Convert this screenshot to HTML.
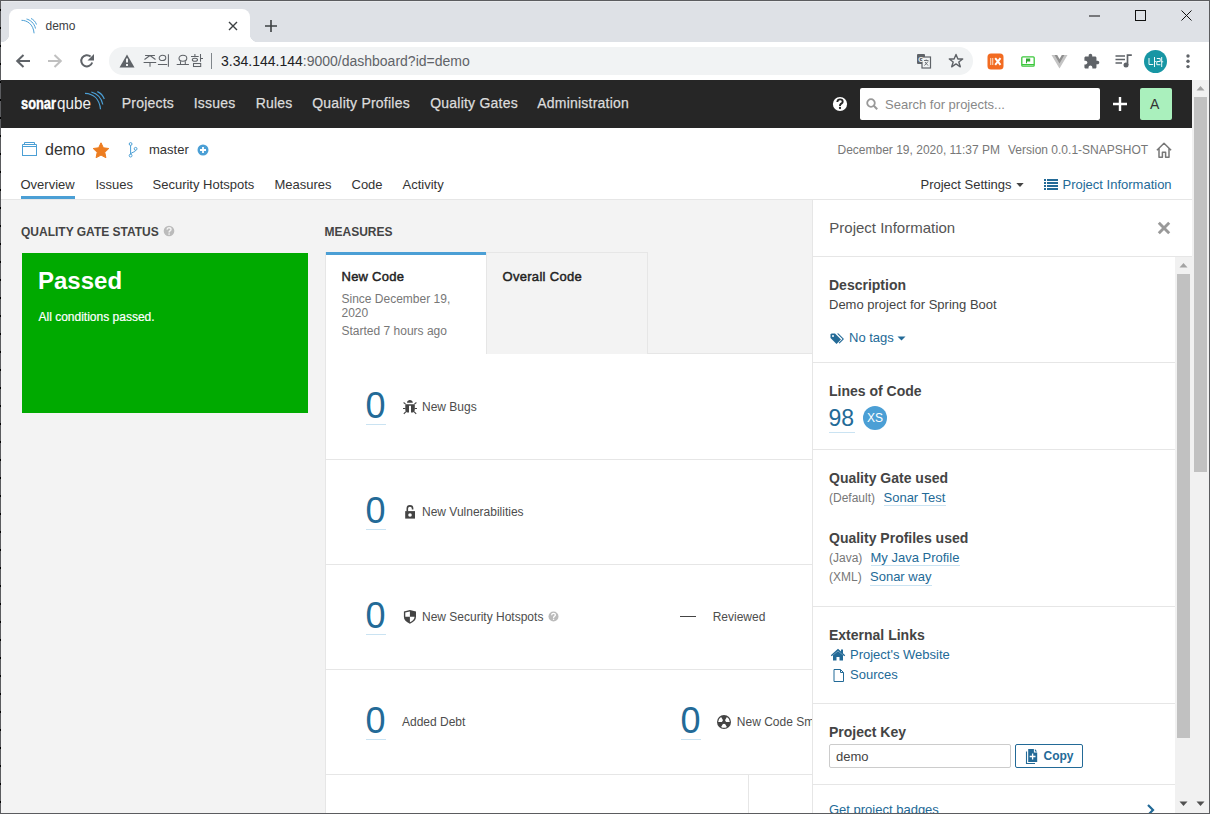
<!DOCTYPE html>
<html><head><meta charset="utf-8">
<style>
*{box-sizing:border-box;margin:0;padding:0}
html,body{width:1210px;height:814px;overflow:hidden;background:#fff;font-family:"Liberation Sans",sans-serif;color:#333;position:relative}
.a{position:absolute}
.t{position:absolute;white-space:nowrap}
#tabs{position:absolute;left:1px;top:1px;width:1208px;height:41px;background:#dee1e6}
#tab{position:absolute;left:8px;top:8px;width:241px;height:33px;background:#fff;border-radius:8px 8px 0 0}
#tab:before,#tab:after{content:"";position:absolute;bottom:0;width:8px;height:8px}
#tab:before{left:-8px;background:radial-gradient(circle at 0 0,#dee1e6 8px,#fff 8.5px)}
#tab:after{right:-8px;background:radial-gradient(circle at 100% 0,#dee1e6 8px,#fff 8.5px)}
#toolbar{position:absolute;left:1px;top:42px;width:1208px;height:38px;background:#fff}
#omni{position:absolute;left:108px;top:5px;width:864px;height:28px;background:#f1f3f4;border-radius:14px}
#frame{position:absolute;left:0;top:0;width:1210px;height:814px;border:1px solid #5b5c5f;pointer-events:none}
</style></head><body>
 <div id="tabs">
  <div id="tab">
   <svg class="a" style="left:12px;top:9px" width="18" height="18" viewBox="0 0 18 18"><g fill="none" stroke="#4b9fd5" stroke-width="1"><path d="M0.5 2.3C6 2.3 12.3 6 13.1 15.3"/><path d="M5.5 1C9 1.8 13.3 5 14.5 10.5"/><path d="M10 0.5C12 1.3 14.5 3.5 15.5 6.5"/></g></svg>
   <div class="a" style="left:36.5px;top:9px;font-size:12px;color:#3c4043;line-height:16px">demo</div>
   <svg class="a" style="left:219px;top:12px" width="10" height="10" viewBox="0 0 10 10"><path d="M1 1L9 9M9 1L1 9" stroke="#3c4043" stroke-width="1.4"/></svg>
  </div>
  <svg class="a" style="left:263px;top:18px" width="14" height="14" viewBox="0 0 14 14"><path d="M7 1V13M1 7H13" stroke="#3c4043" stroke-width="1.6"/></svg>
  <svg class="a" style="left:1088px;top:14px" width="11" height="2"><rect width="11" height="1" y="0.5" fill="#111"/></svg>
  <svg class="a" style="left:1134px;top:9px" width="11" height="11"><rect x="0.5" y="0.5" width="10" height="10" fill="none" stroke="#111" stroke-width="1"/></svg>
  <svg class="a" style="left:1180px;top:9px" width="11" height="11"><path d="M0.5 0.5L10.5 10.5M10.5 0.5L0.5 10.5" stroke="#111" stroke-width="1"/></svg>
 </div>
 <div id="toolbar">
  <svg class="a" style="left:14px;top:11px" width="16" height="16" viewBox="0 0 16 16"><path d="M15 8H2.5M8.5 2L2.2 8L8.5 14" fill="none" stroke="#5f6368" stroke-width="2"/></svg>
  <svg class="a" style="left:46px;top:11px" width="16" height="16" viewBox="0 0 16 16"><path d="M1 8H13.5M7.5 2L13.8 8L7.5 14" fill="none" stroke="#c0c0c0" stroke-width="2"/></svg>
  <svg class="a" style="left:78px;top:11px" width="16" height="16" viewBox="0 0 16 16"><path d="M13.2 9.5A5.6 5.6 0 1 1 11.6 3.6" fill="none" stroke="#5f6368" stroke-width="2"/><path d="M15 1V7.5H8.5Z" fill="#5f6368"/></svg>
  <div id="omni">
   <svg class="a" style="left:10px;top:7px" width="16" height="14" viewBox="0 0 16 14"><path d="M8 0.5L15.5 13.5H0.5Z" fill="#5f6368"/><rect x="7" y="4.5" width="2" height="4" fill="#f1f3f4"/><rect x="7" y="10" width="2" height="2" fill="#f1f3f4"/></svg>
   <svg class="a" style="left:34px;top:7px" width="62" height="14" viewBox="0 0 62 14"><g fill="none" stroke="#5f6368" stroke-width="1.05">
    <path d="M2.1 1.5H11.9M7 1.5L1.5 5.5M7 1.5L12.5 5.5M0.6 8.5H13.2M7 8.5V12.8"/>
    <ellipse cx="19.5" cy="3.9" rx="3.3" ry="2.6"/><path d="M14.9 10.5H24.2M25.4 0.2V12.8"/>
    <ellipse cx="39.9" cy="4.2" rx="3.9" ry="3"/><path d="M37.5 7.2V10.5M42.3 7.2V10.5M33.7 10.5H45.9"/>
    <path d="M51.9 0V2.5M48 2.5H55.7M57.5 0V7.8M57.5 4.4H60"/><ellipse cx="51.9" cy="5.8" rx="2.6" ry="1.5"/><rect x="50.5" y="9.5" width="7.2" height="3"/>
   </g></svg>
   <div class="a" style="left:102px;top:6px;width:1px;height:16px;background:#80868b"></div>
   <div class="a" style="left:112px;top:5px;font-size:14px;line-height:18px;color:#5f6368;white-space:nowrap"><span style="color:#202124">3.34.144.144</span>:9000/dashboard?id=demo</div>
   <svg class="a" style="left:807px;top:6px" width="16" height="16" viewBox="0 0 16 16"><rect x="1" y="1" width="8" height="10" rx="1" fill="#5f6368"/><rect x="6" y="4" width="8.5" height="11" fill="#f1f3f4" stroke="#5f6368" stroke-width="1.2"/><text x="2.2" y="8.8" font-size="7" font-family="Liberation Sans" font-weight="bold" fill="#f1f3f4">G</text><path d="M8 7.5H12.5M10.2 6.5V7.5M8.5 12.5L12 8.5M9 9L12 12.5" stroke="#5f6368" stroke-width="0.9" fill="none"/></svg>
   <svg class="a" style="left:839px;top:6px" width="16" height="16" viewBox="0 0 16 16"><path d="M8 1.5L9.9 6H14.7L10.8 9L12.3 13.8L8 10.9L3.7 13.8L5.2 9L1.3 6H6.1Z" fill="none" stroke="#5f6368" stroke-width="1.4" stroke-linejoin="round"/></svg>
  </div>
  <svg class="a" style="left:986px;top:11px" width="17" height="17" viewBox="0 0 17 17"><rect x="0.5" y="0.5" width="16" height="16" rx="3.5" fill="#f26b21"/><rect x="3" y="5" width="1.3" height="7" fill="#f9c39f"/><rect x="5" y="5" width="1.3" height="7" fill="#f9c39f"/><path d="M8.2 5.2L13.5 11.8M13.5 5.2L8.2 11.8" stroke="#fff" stroke-width="2"/></svg>
  <svg class="a" style="left:1020px;top:14px" width="14" height="11" viewBox="0 0 14 11"><rect x="0.8" y="0.8" width="12.4" height="9.4" rx="1" fill="none" stroke="#3cc83c" stroke-width="1.3"/><path d="M5 2.6H9.2V5.5H6V7.3H5Z" fill="#2fa82f"/><rect x="1" y="8" width="12" height="1.2" fill="#3cc83c"/></svg>
  <svg class="a" style="left:1050px;top:12px" width="17" height="15" viewBox="0 0 17 15"><path d="M0.5 1H5L8.5 7L12 1H16.5L8.5 14.5Z" fill="#c4c4c4"/><path d="M3.6 1H6.2L8.5 5L10.8 1H13.4L8.5 9.6Z" fill="#8f8f8f"/></svg>
  <svg class="a" style="left:1082px;top:11px" width="17" height="17" viewBox="0 0 24 24"><path d="M20.5 11H19V7c0-1.1-.9-2-2-2h-4V3.5C13 2.12 11.88 1 10.5 1S8 2.12 8 3.5V5H4c-1.1 0-1.99.9-1.99 2v3.8H3.5c1.49 0 2.7 1.21 2.7 2.7s-1.21 2.7-2.7 2.7H2V20c0 1.1.9 2 2 2h3.8v-1.5c0-1.49 1.21-2.7 2.7-2.7 1.49 0 2.7 1.21 2.7 2.7V22H17c1.1 0 2-.9 2-2v-4h1.5c1.38 0 2.5-1.12 2.5-2.5S21.88 11 20.5 11z" fill="#5f6368"/></svg>
  <svg class="a" style="left:1114px;top:12px" width="18" height="14" viewBox="0 0 18 14"><path d="M0.5 2H10M0.5 5.5H10M0.5 9H7" stroke="#5f6368" stroke-width="1.6"/><path d="M12.5 11V1.2H16.8" fill="none" stroke="#5f6368" stroke-width="1.7"/><circle cx="11" cy="11" r="2.5" fill="#5f6368"/></svg>
  <div class="a" style="left:1143px;top:8px;width:23px;height:23px;border-radius:50%;background:#1796a4"></div>
  <svg class="a" style="left:1147px;top:14px" width="16" height="13" viewBox="0 0 16 13"><g fill="none" stroke="#fff" stroke-width="0.95"><path d="M1 2V8.5H5.2M6.5 1V11M6.5 5.5H7.8M8.8 2.5H12.2V5.5H8.8V8.7H12.4M13.7 1V11M13.7 5.8H15.2"/></g></svg>
  <svg class="a" style="left:1184px;top:12px" width="6" height="15" viewBox="0 0 6 15"><circle cx="3" cy="2" r="1.7" fill="#5f6368"/><circle cx="3" cy="7.3" r="1.7" fill="#5f6368"/><circle cx="3" cy="12.6" r="1.7" fill="#5f6368"/></svg>
 </div>

<div class="a" style="left:1px;top:80px;width:1191px;height:48px;background:#262626;"></div>
<svg class="a" style="left:20px;top:89px;" width="86" height="26" viewBox="0 0 86 26"><text x="1" y="20.2" font-family="Liberation Sans" font-weight="700" font-size="16" fill="#fff" stroke="#fff" stroke-width="0.45" textLength="35" lengthAdjust="spacingAndGlyphs">sonar</text><text x="37" y="20.2" font-family="Liberation Sans" font-size="16.5" fill="#f0f0f0" textLength="34" lengthAdjust="spacingAndGlyphs">qube</text><g fill="none" stroke="#4b9fd5" stroke-width="1.2"><path d="M65 4.3C73 4.6 79.5 9.5 80.5 20.3"/><path d="M71.3 3C77 4.6 81.5 9 82.8 15.5"/><path d="M77.3 2.6C80.5 4 83 6.5 84.3 10"/></g></svg>
<div class="t" style="left:121.7px;top:96.35px;font-size:14px;line-height:14px;color:#dcdcdc;font-weight:400;letter-spacing:0.22px;-webkit-text-stroke:0.25px #dcdcdc">Projects</div>
<div class="t" style="left:193.7px;top:96.35px;font-size:14px;line-height:14px;color:#dcdcdc;font-weight:400;letter-spacing:0.22px;-webkit-text-stroke:0.25px #dcdcdc">Issues</div>
<div class="t" style="left:255.7px;top:96.35px;font-size:14px;line-height:14px;color:#dcdcdc;font-weight:400;letter-spacing:0.22px;-webkit-text-stroke:0.25px #dcdcdc">Rules</div>
<div class="t" style="left:312.2px;top:96.35px;font-size:14px;line-height:14px;color:#dcdcdc;font-weight:400;letter-spacing:0.22px;-webkit-text-stroke:0.25px #dcdcdc">Quality Profiles</div>
<div class="t" style="left:430.2px;top:96.35px;font-size:14px;line-height:14px;color:#dcdcdc;font-weight:400;letter-spacing:0.22px;-webkit-text-stroke:0.25px #dcdcdc">Quality Gates</div>
<div class="t" style="left:537.2px;top:96.35px;font-size:14px;line-height:14px;color:#dcdcdc;font-weight:400;letter-spacing:0.22px;-webkit-text-stroke:0.25px #dcdcdc">Administration</div>
<svg class="a" style="left:832px;top:96px;" width="16" height="16" viewBox="0 0 16 16"><circle cx="8" cy="8" r="7.1" fill="#fff"/><path d="M5.3 6C5.5 4.1 6.7 3.4 8 3.4C9.6 3.4 10.7 4.4 10.7 5.7C10.7 7.1 9.3 7.5 8.6 8.2C8.2 8.6 8 9 8 9.9" fill="none" stroke="#262626" stroke-width="1.9"/><circle cx="8" cy="12" r="1.15" fill="#262626"/></svg>
<div class="a" style="left:860px;top:88px;width:240px;height:32px;background:#fff;border-radius:2px"></div>
<svg class="a" style="left:866px;top:98px;" width="12" height="12" viewBox="0 0 12 12"><circle cx="5" cy="5" r="3.8" fill="none" stroke="#999" stroke-width="1.8"/><path d="M7.8 7.8L11.2 11.2" stroke="#999" stroke-width="2"/></svg>
<div class="t" style="left:885px;top:97.80px;font-size:13px;line-height:13px;color:#888;font-weight:400;">Search for projects...</div>
<svg class="a" style="left:1112px;top:96px;" width="16" height="16" viewBox="0 0 16 16"><path d="M8 1V15M1 8H15" stroke="#fff" stroke-width="2.4"/></svg>
<div class="a" style="left:1140px;top:88px;width:32px;height:32px;background:#aaf0bd;border-radius:2px"></div>
<div class="t" style="left:1150px;top:97.15px;font-size:14px;line-height:14px;color:#333;font-weight:400;">A</div>
<div class="a" style="left:1px;top:128px;width:1191px;height:72px;background:#fff;"></div>
<div class="a" style="left:1px;top:199px;width:1191px;height:1px;background:#e6e6e6;"></div>
<svg class="a" style="left:22px;top:142px;" width="15" height="14" viewBox="0 0 15 14"><g fill="none" stroke="#4b9fd5" stroke-width="1"><rect x="0.5" y="4.5" width="14" height="9"/><path d="M0.5 4.5V2.5H14.5V4.5M2.5 2.5V0.5H12.5V2.5"/></g></svg>
<div class="t" style="left:45px;top:142.46px;font-size:16px;line-height:16px;color:#333;font-weight:400;">demo</div>
<svg class="a" style="left:92px;top:142px;" width="18" height="17" viewBox="0 0 18 17"><path d="M9 0.8L11.4 5.8L16.8 6.5L12.8 10.3L13.9 15.7L9 13.1L4.1 15.7L5.2 10.3L1.2 6.5L6.6 5.8Z" fill="#ed7d20" stroke="#ed7d20" stroke-width="1" stroke-linejoin="round"/></svg>
<svg class="a" style="left:127px;top:141px;" width="12" height="18" viewBox="0 0 12 18"><g fill="none" stroke="#4b9fd5" stroke-width="1"><circle cx="3.6" cy="3" r="1.4"/><circle cx="3.6" cy="14.6" r="1.4"/><circle cx="8.6" cy="7.8" r="1.4"/><path d="M3.6 4.4V13.2M8.6 9.2C8.6 11.6 3.6 11 3.6 13.2"/></g></svg>
<div class="t" style="left:149px;top:143.00px;font-size:13px;line-height:13px;color:#333;font-weight:400;">master</div>
<svg class="a" style="left:197px;top:144px;" width="12" height="12" viewBox="0 0 12 12"><circle cx="6" cy="6" r="5.5" fill="#4b9fd5"/><path d="M6 3V9M3 6H9" stroke="#fff" stroke-width="1.8"/></svg>
<div class="t" style="left:837.5px;top:143.84px;font-size:12px;line-height:12px;color:#777;font-weight:400;">December 19, 2020, 11:37 PM</div>
<div class="t" style="left:1008px;top:143.84px;font-size:12px;line-height:12px;color:#777;font-weight:400;">Version 0.0.1-SNAPSHOT</div>
<svg class="a" style="left:1156px;top:141px;" width="16" height="18" viewBox="0 0 16 18"><path d="M0.9 9.3L8 2.3L15.1 9.3M3 7.4V16.2H6.4V11.3H9.6V16.2H13V7.4" fill="none" stroke="#777" stroke-width="1.5" stroke-linejoin="round"/></svg>
<div class="t" style="left:20.5px;top:177.80px;font-size:13px;line-height:13px;color:#333;font-weight:400;">Overview</div>
<div class="t" style="left:95.5px;top:177.80px;font-size:13px;line-height:13px;color:#333;font-weight:400;">Issues</div>
<div class="t" style="left:152.5px;top:177.80px;font-size:13px;line-height:13px;color:#333;font-weight:400;">Security Hotspots</div>
<div class="t" style="left:274.5px;top:177.80px;font-size:13px;line-height:13px;color:#333;font-weight:400;">Measures</div>
<div class="t" style="left:351.5px;top:177.80px;font-size:13px;line-height:13px;color:#333;font-weight:400;">Code</div>
<div class="t" style="left:402.5px;top:177.80px;font-size:13px;line-height:13px;color:#333;font-weight:400;">Activity</div>
<div class="a" style="left:21px;top:196px;width:54px;height:3px;background:#4b9fd5;"></div>
<div class="t" style="left:920.5px;top:177.80px;font-size:13px;line-height:13px;color:#333;font-weight:400;">Project Settings</div>
<svg class="a" style="left:1015.5px;top:183px;" width="8" height="5" viewBox="0 0 8 5"><path d="M0.3 0H7.7L4 4Z" fill="#444"/></svg>
<svg class="a" style="left:1044px;top:179px;" width="14" height="11" viewBox="0 0 14 11"><g fill="#236a97"><rect x="0" y="0" width="2" height="2"/><rect x="3" y="0" width="11" height="2"/><rect x="0" y="3" width="2" height="2"/><rect x="3" y="3" width="11" height="2"/><rect x="0" y="6" width="2" height="2"/><rect x="3" y="6" width="11" height="2"/><rect x="0" y="9" width="2" height="2"/><rect x="3" y="9" width="11" height="2"/></g></svg>
<div class="t" style="left:1062.5px;top:177.80px;font-size:13px;line-height:13px;color:#236a97;font-weight:400;">Project Information</div>
<div class="a" style="left:1px;top:200px;width:1191px;height:613px;background:#f3f3f3;"></div>
<div class="t" style="left:21px;top:225.84px;font-size:12px;line-height:12px;color:#444;font-weight:700;">QUALITY GATE STATUS</div>
<svg class="a" style="left:163px;top:225px;" width="12" height="12" viewBox="0 0 12 12"><circle cx="6" cy="6" r="5.3" fill="#bbb"/><path d="M4 4.6C4.1 3.3 5 2.7 6 2.7C7.2 2.7 8 3.4 8 4.4C8 5.4 7 5.7 6.5 6.2C6.2 6.5 6.1 6.8 6.1 7.4" fill="none" stroke="#f3f3f3" stroke-width="1.4"/><circle cx="6.1" cy="9" r="0.85" fill="#f3f3f3"/></svg>
<div class="a" style="left:22px;top:253px;width:286px;height:160px;background:#00aa00;"></div>
<div class="t" style="left:38px;top:268.68px;font-size:24px;line-height:24px;color:#fff;font-weight:700;">Passed</div>
<div class="t" style="left:38.5px;top:310.64px;font-size:12px;line-height:12px;color:#fff;font-weight:400;-webkit-text-stroke:0.2px #fff">All conditions passed.</div>
<div class="t" style="left:324.5px;top:225.84px;font-size:12px;line-height:12px;color:#444;font-weight:700;">MEASURES</div>
<div class="a" style="left:325px;top:252px;width:487px;height:561px;background:#fff;border-left:1px solid #e6e6e6"></div>
<div class="a" style="left:486px;top:252px;width:162px;height:102px;background:#f3f3f3;border:1px solid #e6e6e6;border-bottom:none"></div>
<div class="a" style="left:648px;top:252px;width:164px;height:102px;background:#f3f3f3;border-bottom:1px solid #e6e6e6"></div>
<div class="a" style="left:326px;top:252px;width:160px;height:3px;background:#4b9fd5;"></div>
<div class="t" style="left:341.5px;top:270.00px;font-size:13px;line-height:13px;color:#222;font-weight:400;letter-spacing:0.25px;-webkit-text-stroke:0.45px #222">New Code</div>
<div class="t" style="left:341.5px;top:292.74px;font-size:12px;line-height:12px;color:#777;font-weight:400;">Since December 19,</div>
<div class="t" style="left:341.5px;top:307.14px;font-size:12px;line-height:12px;color:#777;font-weight:400;">2020</div>
<div class="t" style="left:341.5px;top:324.84px;font-size:12px;line-height:12px;color:#777;font-weight:400;">Started 7 hours ago</div>
<div class="t" style="left:502.5px;top:269.80px;font-size:13px;line-height:13px;color:#222;font-weight:400;letter-spacing:0.3px;-webkit-text-stroke:0.45px #222">Overall Code</div>
<div class="a" style="left:326px;top:459px;width:486px;height:1px;background:#e6e6e6;"></div>
<div class="a" style="left:326px;top:564px;width:486px;height:1px;background:#e6e6e6;"></div>
<div class="a" style="left:326px;top:669px;width:486px;height:1px;background:#e6e6e6;"></div>
<div class="a" style="left:326px;top:774px;width:486px;height:1px;background:#e6e6e6;"></div>
<div class="a" style="left:748px;top:775px;width:1px;height:38px;background:#e6e6e6;"></div>
<div class="t" style="left:365.5px;top:388.03px;font-size:36px;line-height:36px;color:#236a97;font-weight:400;">0</div>
<div class="a" style="left:366px;top:424px;width:20px;height:1px;background:#cae3f2;"></div>
<svg class="a" style="left:403px;top:400px;" width="14" height="15" viewBox="0 0 14 15"><path d="M4 2.7C4 0.9 5.5 0.1 6.9 0.1C8.3 0.1 9.8 0.9 9.8 2.7Z" fill="#444"/><path d="M2.3 4.2H11.8V9.5C11.8 11 11 12.6 9.5 12.6H8V5.8H6V12.6H4.6C3 12.6 2.3 11 2.3 9.5Z" fill="#444"/><path d="M0.6 2.5L2.6 4.1M0 8.5H2.5M0.8 13.8L3 11.6M13.4 2.5L11.4 4.1M14 8.5H11.5M13.2 13.8L11 11.6" stroke="#444" stroke-width="1.1" fill="none"/></svg>
<div class="t" style="left:422.0px;top:400.84px;font-size:12px;line-height:12px;color:#4d4d4d;font-weight:400;">New Bugs</div>
<div class="t" style="left:365.5px;top:493.03px;font-size:36px;line-height:36px;color:#236a97;font-weight:400;">0</div>
<div class="a" style="left:366px;top:529px;width:20px;height:1px;background:#cae3f2;"></div>
<svg class="a" style="left:404px;top:504px;" width="12" height="15" viewBox="0 0 12 15"><path d="M3.3 7.5V4.55A2.65 2.65 0 0 1 8.6 4.55V5.4" fill="none" stroke="#444" stroke-width="1.6"/><rect x="1.2" y="7.1" width="9.8" height="7.5" fill="#444"/><circle cx="6" cy="11" r="1.8" fill="#fff"/></svg>
<div class="t" style="left:422.0px;top:505.84px;font-size:12px;line-height:12px;color:#4d4d4d;font-weight:400;">New Vulnerabilities</div>
<div class="t" style="left:365.5px;top:598.03px;font-size:36px;line-height:36px;color:#236a97;font-weight:400;">0</div>
<div class="a" style="left:366px;top:634px;width:20px;height:1px;background:#cae3f2;"></div>
<svg class="a" style="left:403px;top:609px;" width="14" height="16" viewBox="0 0 14 16"><path d="M6.9 1.1L13 2.5V7.8C13 10.8 10.8 13.2 6.9 14.7C3 13.2 0.9 10.8 0.9 7.8V2.5Z" fill="#444"/><path d="M2.3 3.6L6.9 2.6V7.7H2.3Z M6.9 7.7H11.6C11.4 10.2 9.7 12.2 6.9 13.3Z" fill="#fff"/></svg>
<div class="t" style="left:422.0px;top:610.84px;font-size:12px;line-height:12px;color:#4d4d4d;font-weight:400;">New Security Hotspots</div>
<svg class="a" style="left:548px;top:611px;" width="11" height="11" viewBox="0 0 11 11"><circle cx="5.5" cy="5.5" r="5" fill="#bbb"/><path d="M3.6 4.2C3.7 3 4.5 2.4 5.5 2.4C6.6 2.4 7.4 3.1 7.4 4C7.4 4.9 6.5 5.2 6 5.7C5.7 6 5.6 6.3 5.6 6.9" fill="none" stroke="#fff" stroke-width="1.3"/><circle cx="5.6" cy="8.3" r="0.8" fill="#fff"/></svg>
<div class="a" style="left:680px;top:616px;width:16px;height:1px;background:#444;"></div>
<div class="t" style="left:712.7px;top:610.84px;font-size:12px;line-height:12px;color:#4d4d4d;font-weight:400;">Reviewed</div>
<div class="t" style="left:365.5px;top:703.03px;font-size:36px;line-height:36px;color:#236a97;font-weight:400;">0</div>
<div class="a" style="left:366px;top:739px;width:20px;height:1px;background:#cae3f2;"></div>
<div class="t" style="left:402.0px;top:715.84px;font-size:12px;line-height:12px;color:#4d4d4d;font-weight:400;">Added Debt</div>
<div class="t" style="left:680.5px;top:703.03px;font-size:36px;line-height:36px;color:#236a97;font-weight:400;">0</div>
<div class="a" style="left:681px;top:739px;width:20px;height:1px;background:#cae3f2;"></div>
<svg class="a" style="left:716px;top:714px;" width="16" height="16" viewBox="0 0 16 16"><circle cx="8" cy="8" r="7" fill="#444"/><path d="M6.10 8.00L2.20 8.00A5.8 5.8 0 0 1 5.10 2.98L7.05 6.35A1.9 1.9 0 0 0 6.10 8.00ZM8.95 6.35L10.90 2.98A5.8 5.8 0 0 1 13.80 8.00L9.90 8.00A1.9 1.9 0 0 0 8.95 6.35ZM8.95 9.65L10.90 13.02A5.8 5.8 0 0 1 5.10 13.02L7.05 9.65A1.9 1.9 0 0 0 8.95 9.65Z" fill="#fff"/></svg>
<div class="t" style="left:736.8px;top:715.84px;font-size:12px;line-height:12px;color:#4d4d4d;font-weight:400;">New Code Smells</div>
<div class="a" style="left:812px;top:200px;width:380px;height:613px;background:#fff;border-left:1px solid #e6e6e6"></div>
<div class="a" style="left:813px;top:256px;width:379px;height:1px;background:#e6e6e6;"></div>
<div class="t" style="left:829.3px;top:220.10px;font-size:15px;line-height:15px;color:#555;font-weight:400;">Project Information</div>
<svg class="a" style="left:1157px;top:221px;" width="14" height="14" viewBox="0 0 14 14"><path d="M1.8 1.8L12.2 12.2M12.2 1.8L1.8 12.2" stroke="#999" stroke-width="2.9"/></svg>
<div class="t" style="left:829px;top:278.15px;font-size:14px;line-height:14px;color:#444;font-weight:700;">Description</div>
<div class="t" style="left:829px;top:297.50px;font-size:13px;line-height:13px;color:#444;font-weight:400;">Demo project for Spring Boot</div>
<svg class="a" style="left:830px;top:333px;" width="15" height="12" viewBox="0 0 15 12"><path d="M0.5 1.5V5L6.5 11L11 6.5L5 0.5H1.5Z" fill="#236a97"/><circle cx="3" cy="3" r="1" fill="#fff"/><path d="M7 0.5H8.5L14 6L9.5 10.5L8.7 9.7L12.5 6Z" fill="#236a97"/></svg>
<div class="t" style="left:849px;top:331.40px;font-size:13px;line-height:13px;color:#236a97;font-weight:400;">No tags</div>
<svg class="a" style="left:897px;top:336px;" width="9" height="5" viewBox="0 0 9 5"><path d="M0.5 0.5H8.5L4.5 4.5Z" fill="#236a97"/></svg>
<div class="a" style="left:813px;top:362px;width:362px;height:1px;background:#e6e6e6;"></div>
<div class="t" style="left:829px;top:383.85px;font-size:14px;line-height:14px;color:#444;font-weight:700;">Lines of Code</div>
<div class="t" style="left:828.5px;top:406.53px;font-size:23px;line-height:23px;color:#236a97;font-weight:400;">98</div>
<div class="a" style="left:829px;top:432px;width:26px;height:1px;background:#cae3f2;"></div>
<div class="a" style="left:863px;top:406px;width:24px;height:24px;background:#4b9fd5;border-radius:50%"></div>
<div class="t" style="left:867px;top:411.84px;font-size:12px;line-height:12px;color:#fff;font-weight:400;">XS</div>
<div class="a" style="left:813px;top:449px;width:362px;height:1px;background:#e6e6e6;"></div>
<div class="t" style="left:829px;top:470.95px;font-size:14px;line-height:14px;color:#444;font-weight:700;">Quality Gate used</div>
<div class="t" style="left:829px;top:491.74px;font-size:12px;line-height:12px;color:#777;font-weight:400;">(Default)</div>
<div class="t" style="left:883.5px;top:490.90px;font-size:13px;line-height:13px;color:#236a97;font-weight:400;">Sonar Test</div>
<div class="a" style="left:884px;top:505px;width:62px;height:1px;background:#cae3f2;"></div>
<div class="t" style="left:829px;top:531.15px;font-size:14px;line-height:14px;color:#444;font-weight:700;">Quality Profiles used</div>
<div class="t" style="left:829px;top:551.64px;font-size:12px;line-height:12px;color:#777;font-weight:400;">(Java)</div>
<div class="t" style="left:870.5px;top:550.80px;font-size:13px;line-height:13px;color:#236a97;font-weight:400;">My Java Profile</div>
<div class="a" style="left:871px;top:565px;width:89px;height:1px;background:#cae3f2;"></div>
<div class="t" style="left:829px;top:571.24px;font-size:12px;line-height:12px;color:#777;font-weight:400;">(XML)</div>
<div class="t" style="left:870px;top:570.40px;font-size:13px;line-height:13px;color:#236a97;font-weight:400;">Sonar way</div>
<div class="a" style="left:870px;top:585px;width:62px;height:1px;background:#cae3f2;"></div>
<div class="a" style="left:813px;top:606px;width:362px;height:1px;background:#e6e6e6;"></div>
<div class="t" style="left:829px;top:627.75px;font-size:14px;line-height:14px;color:#444;font-weight:700;">External Links</div>
<svg class="a" style="left:830px;top:648px;" width="16" height="13" viewBox="0 0 16 13"><path d="M8 0.8L15.2 7.2L14.3 8.2L8 2.7L1.7 8.2L0.8 7.2Z" fill="#236a97"/><path d="M3 7.2L8 3L13 7.2V12.5H9.5V9H6.5V12.5H3Z" fill="#236a97"/><rect x="11" y="1.5" width="2" height="3.5" fill="#236a97"/></svg>
<div class="t" style="left:850px;top:647.50px;font-size:13px;line-height:13px;color:#236a97;font-weight:400;">Project's Website</div>
<svg class="a" style="left:832.5px;top:669px;" width="12" height="13" viewBox="0 0 12 13"><path d="M1 0.5H7.5L10.5 3.5V12.5H1Z M7.5 0.5V3.5H10.5" fill="none" stroke="#236a97" stroke-width="1"/></svg>
<div class="t" style="left:850px;top:667.70px;font-size:13px;line-height:13px;color:#236a97;font-weight:400;">Sources</div>
<div class="a" style="left:813px;top:703px;width:362px;height:1px;background:#e6e6e6;"></div>
<div class="t" style="left:829px;top:725.15px;font-size:14px;line-height:14px;color:#444;font-weight:700;">Project Key</div>
<div class="a" style="left:829px;top:744px;width:182px;height:24px;background:#fff;border:1px solid #ccc;border-radius:2px"></div>
<div class="t" style="left:836px;top:749.80px;font-size:13px;line-height:13px;color:#444;font-weight:400;">demo</div>
<div class="a" style="left:1015px;top:744px;width:68px;height:24px;background:#fff;border:1px solid #236a97;border-radius:2px"></div>
<svg class="a" style="left:1024px;top:748px;" width="15" height="17" viewBox="0 0 15 17"><path d="M2.5 3.5V15.5H11" fill="none" stroke="#236a97" stroke-width="1.1"/><path d="M4.2 1H9.9V4.4H13.2V14H4.2Z M10.9 1L13.2 3.4H10.9Z" fill="#236a97"/><path d="M8.6 5.6V11.4M5.7 8.5H11.5" stroke="#fff" stroke-width="1.3"/></svg>
<div class="t" style="left:1043.5px;top:749.64px;font-size:12px;line-height:12px;color:#236a97;font-weight:700;">Copy</div>
<div class="a" style="left:813px;top:784px;width:362px;height:1px;background:#e6e6e6;"></div>
<div class="t" style="left:829px;top:803.00px;font-size:13px;line-height:13px;color:#236a97;font-weight:400;">Get project badges</div>
<svg class="a" style="left:1146px;top:803.5px;" width="9" height="12" viewBox="0 0 9 12"><path d="M2 1L7 6L2 11" fill="none" stroke="#236a97" stroke-width="2.2"/></svg>
<div class="a" style="left:1175px;top:257px;width:17px;height:556px;background:#f1f1f1;"></div>
<svg class="a" style="left:1179px;top:262px;" width="9" height="6" viewBox="0 0 9 6"><path d="M0.5 5.5L4.5 1L8.5 5.5Z" fill="#a3a3a3"/></svg>
<div class="a" style="left:1177px;top:274px;width:13px;height:464px;background:#c1c1c1;"></div>
<svg class="a" style="left:1179px;top:801px;" width="9" height="6" viewBox="0 0 9 6"><path d="M0.5 0.5L4.5 5L8.5 0.5Z" fill="#505050"/></svg>
<div class="a" style="left:1192px;top:80px;width:17px;height:733px;background:#f1f1f1;"></div>
<svg class="a" style="left:1196px;top:85px;" width="9" height="6" viewBox="0 0 9 6"><path d="M0.5 5.5L4.5 1L8.5 5.5Z" fill="#a3a3a3"/></svg>
<div class="a" style="left:1194px;top:97px;width:13px;height:375px;background:#c1c1c1;"></div>
<svg class="a" style="left:1196px;top:801px;" width="9" height="6" viewBox="0 0 9 6"><path d="M0.5 0.5L4.5 5L8.5 0.5Z" fill="#505050"/></svg>

<div class="a" style="left:1px;top:1px;width:1208px;height:1px;background:#e8eaed"></div>
<div id="frame"></div>
<div class="a" style="left:0;top:0;width:1px;height:814px;background:repeating-linear-gradient(to bottom,transparent 0,transparent 9px,#000 9px,#000 11px,transparent 11px,transparent 18px)"></div>
</body></html>
